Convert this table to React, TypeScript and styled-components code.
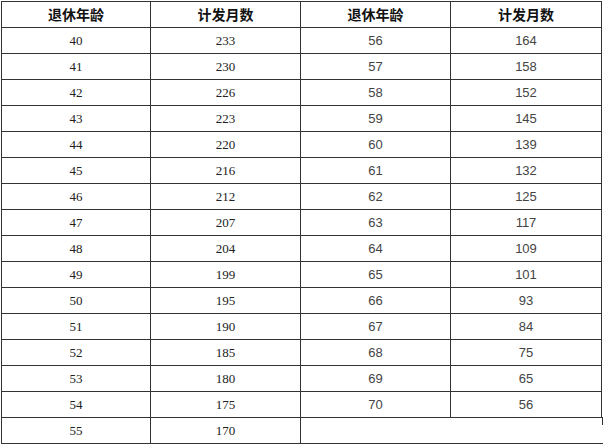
import React from 'react';
import styled, { createGlobalStyle } from 'styled-components';

const GlobalStyle = createGlobalStyle`
  html, body {
    margin: 0;
    padding: 0;
    background: #fff;
  }
`;

const Wrapper = styled.div`
  width: 603px;
  padding: 1px 0 0 1px;
  box-sizing: border-box;
`;

const Table = styled.table`
  border-collapse: collapse;
  table-layout: fixed;
  width: 600px;
`;

const HeadCell = styled.th`
  height: 25px;
  padding: 0;
  border: 1px solid #333;
  font-family: "Noto Sans CJK SC", "Liberation Sans", sans-serif;
  font-size: 14px;
  font-weight: bold;
  color: #111;
  text-align: center;
  line-height: 25px;
`;

const Cell = styled.td<{ $sans?: boolean }>`
  height: 25px;
  padding: 0;
  border: 1px solid #333;
  font-family: ${({ $sans }) =>
    $sans ? '"Liberation Sans", Arial, sans-serif' : '"Liberation Serif", "Times New Roman", serif'};
  font-size: 13px;
  color: ${({ $sans }) => ($sans ? '#444' : '#222')};
  text-align: center;
  line-height: 25px;
`;

const EmptyCell = styled.td`
  position: relative;
  padding: 0;
  border-top: 1px solid #333;
  border-left: 1px solid #333;
  border-right: none;
  border-bottom: 1px solid #333;

  &::after {
    content: '';
    position: absolute;
    right: -1px;
    top: -1px;
    width: 1px;
    height: 8px;
    background: #333;
  }
`;

const BottomExtend = styled.div`
  width: 3px;
  height: 1px;
  margin: -1px 0 0 599px;
  background: #333;
`;

const left = [
  [40, 233], [41, 230], [42, 226], [43, 223], [44, 220], [45, 216], [46, 212], [47, 207],
  [48, 204], [49, 199], [50, 195], [51, 190], [52, 185], [53, 180], [54, 175], [55, 170],
];

const right = [
  [56, 164], [57, 158], [58, 152], [59, 145], [60, 139], [61, 132], [62, 125], [63, 117],
  [64, 109], [65, 101], [66, 93], [67, 84], [68, 75], [69, 65], [70, 56],
];

const App: React.FC = () => (
  <>
    <GlobalStyle />
    <Wrapper>
      <Table>
        <colgroup>
          <col style={{ width: 149 }} />
          <col style={{ width: 150 }} />
          <col style={{ width: 150 }} />
          <col style={{ width: 151 }} />
        </colgroup>
        <thead>
          <tr>
            <HeadCell>退休年龄</HeadCell>
            <HeadCell>计发月数</HeadCell>
            <HeadCell>退休年龄</HeadCell>
            <HeadCell>计发月数</HeadCell>
          </tr>
        </thead>
        <tbody>
          {left.map((row, i) => (
            <tr key={row[0]}>
              <Cell>{row[0]}</Cell>
              <Cell>{row[1]}</Cell>
              {right[i] ? (
                <>
                  <Cell $sans>{right[i][0]}</Cell>
                  <Cell $sans>{right[i][1]}</Cell>
                </>
              ) : (
                <EmptyCell colSpan={2} />
              )}
            </tr>
          ))}
        </tbody>
      </Table>
      <BottomExtend />
    </Wrapper>
  </>
);

export default App;
